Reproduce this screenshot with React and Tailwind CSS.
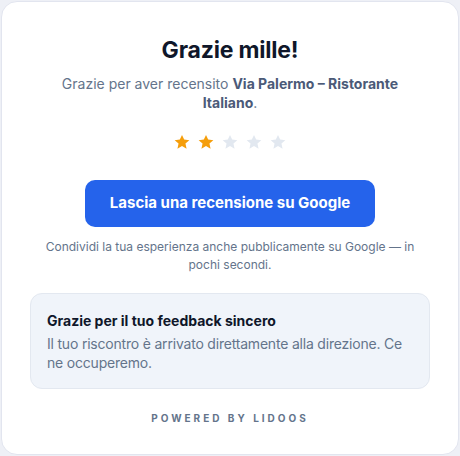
function Stars({ value }) {
  return (
    <div className="flex items-center justify-center gap-[6px]">
      {[1, 2, 3, 4, 5].map(i => (
        <svg key={i} width="18" height="18" viewBox="0 0 24 24">
          <path
            d="M12 2.5l2.9 6.3 6.9.7-5.2 4.6 1.5 6.8L12 17.4l-6.1 3.5 1.5-6.8-5.2-4.6 6.9-.7z"
            fill={i <= value ? '#f59e0b' : '#e2e8f0'}
          />
        </svg>
      ))}
    </div>
  );
}

export default function App() {
  return (
    <div className="w-[460px] h-[456px] bg-[#eef0f6] p-px" style={{ fontFamily: 'Inter, "Noto Sans", sans-serif' }}>
      <div className="h-full bg-white rounded-2xl border border-[#e2e5ef] flex flex-col items-center px-[28px] pt-[34px]">
        <h1 className="text-[23px] leading-7 font-bold text-[#0f172a] tracking-[-0.2px]">Grazie mille!</h1>
        <p className="mt-[10px] text-[14px] leading-[19px] text-[#64748b] text-center px-[24px]">
          Grazie per aver recensito <span className="font-bold text-[#4b5a78]">Via Palermo – Ristorante Italiano</span>.
        </p>
        <div className="mt-[21px]">
          <Stars value={2} />
        </div>
        <button className="mt-[29px] w-[290px] h-[47px] rounded-[10px] bg-[#2563eb] text-white text-[15px] font-bold">
          Lascia una recensione su Google
        </button>
        <p className="mt-[11px] text-[12px] leading-[18px] text-[#64748b] text-center px-[14px]">
          Condividi la tua esperienza anche pubblicamente su Google — in pochi secondi.
        </p>
        <div className="mt-[19px] w-full rounded-xl bg-[#f0f4fa] border border-[#e3e8f0] px-[16px] pt-[18px] pb-[16px]">
          <div className="text-[14px] leading-[18px] font-bold text-[#0f172a]">Grazie per il tuo feedback sincero</div>
          <p className="mt-[4px] text-[14px] leading-[19px] text-[#64748b] tracking-[-0.2px]">
            Il tuo riscontro è arrivato direttamente alla direzione. Ce ne occuperemo.
          </p>
        </div>
        <div className="mt-[22px] text-[10px] font-bold tracking-[3px] text-[#64748b]">POWERED BY LIDOOS</div>
      </div>
    </div>
  );
}
